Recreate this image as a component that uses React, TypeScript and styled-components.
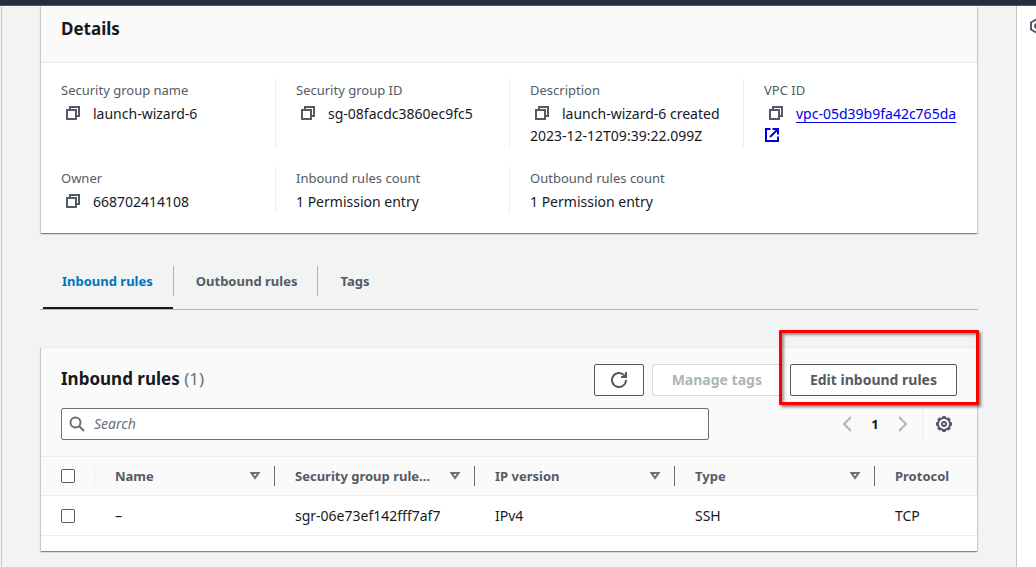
import React from "react";
import styled, { createGlobalStyle, css } from "styled-components";

const GlobalStyle = createGlobalStyle`
  *, *::before, *::after { box-sizing: border-box; }
  body {
    margin: 0;
    background: #f2f3f3;
    color: #16191f;
    font-family: "Noto Sans", "Open Sans", sans-serif;
    font-size: 14px;
    line-height: 22px;
  }
`;

const Shell = styled.div`
  display: flex;
  flex-direction: column;
  min-height: 100vh;
`;

const TopBar = styled.header`
  height: 6px;
  background: #232f3e;
  border-bottom: 1px solid #5d5468;
`;

const Columns = styled.div`
  display: flex;
  flex: 1;
`;

const Content = styled.main`
  flex: 1;
  min-width: 0;
  margin-left: 1px;
  padding: 0 38px 15px;
  border-left: 1px solid #c3c8c8;
`;

const HelpRail = styled.aside`
  flex: none;
  width: 20px;
  padding: 12px 0 0 12px;
  overflow: hidden;
  background: #fff;
  border-left: 1px solid #bfc7c7;
`;

const IconButton = styled.button`
  display: inline-flex;
  padding: 0;
  border: 0;
  background: none;
  color: ${(p) => p.color ?? "#545b64"};
`;

const Card = styled.section`
  margin: 0 1px;
  background: #fff;
  box-shadow: 0 1px 1px 0 rgba(0, 28, 36, 0.3), 1px 1px 1px 0 rgba(0, 28, 36, 0.15),
    -1px 1px 1px 0 rgba(0, 28, 36, 0.15);
`;

const CardHeader = styled.div`
  padding: 11px 20px 22px;
  background: #fafafa;
  border-bottom: 1px solid #eaeded;
`;

const Title = styled.h2`
  margin: 0;
  font-size: 17px;
  line-height: 23px;
  font-weight: 700;
`;

const Count = styled.span`
  color: #687078;
  font-weight: 400;
`;

const Fields = styled.dl`
  display: grid;
  grid-template-columns: repeat(4, 1fr);
  row-gap: 20px;
  margin: 0;
  padding: 16px 0 20px;
`;

const FieldBox = styled.div`
  min-width: 0;
  padding: 0 16px 0 20px;
  &:not(:nth-child(4n + 1)) {
    border-left: 1px solid #eaeded;
  }
`;

const FieldLabel = styled.dt`
  margin-bottom: 2px;
  color: #545b64;
  font-size: 13px;
`;

const FieldValue = styled.dd`
  margin: 0;
`;

const CopyButton = styled(IconButton)`
  margin: 0 12px 0 4px;
  vertical-align: -2px;
`;

const Link = styled.a`
  color: #0000e6;
  text-underline-offset: 3px;
  svg {
    vertical-align: -2px;
  }
`;

const Tabs = styled.div`
  display: flex;
  margin-top: 33px;
  border-bottom: 1px solid #aab7b8;
`;

const TabSlot = styled.div`
  & + &::before {
    content: "";
    float: left;
    width: 1px;
    height: 30px;
    background: #aab7b8;
  }
`;

const Tab = styled.button<{ $active?: boolean }>`
  height: 43px;
  padding: 0 20px 12px 19px;
  border: 0;
  border-bottom: 2px solid ${(p) => (p.$active ? "#16191f" : "transparent")};
  margin: 0 0 0 3px;
  background: none;
  color: ${(p) => (p.$active ? "#0073bb" : "#545b64")};
  font: 700 13px/24px "Noto Sans", sans-serif;
`;

const RulesCard = styled(Card)`
  margin-top: 37px;
  border-top: 1px solid #eaeded;
`;

const RulesHeader = styled.div`
  padding: 16px 20px;
  background: #fafafa;
`;

const HeaderRow = styled.div`
  display: flex;
  justify-content: space-between;
`;

const RulesTitle = styled(Title)`
  padding-top: 3px;
`;

const Actions = styled.div`
  display: flex;
  gap: 8px;
`;

const Button = styled.button`
  display: inline-flex;
  align-items: center;
  justify-content: center;
  height: 32px;
  padding: 0 19px;
  border: 1px solid #545b64;
  border-radius: 2px;
  background: #fff;
  color: #545b64;
  font: 700 14px/20px "Noto Sans", sans-serif;
  &:disabled {
    border-color: #d5dbdb;
    color: #aab7b8;
  }
`;

const RefreshButton = styled(Button)`
  width: 50px;
  padding: 0;
`;

const Highlighted = styled.div`
  position: relative;
  display: flex;
  &::after {
    content: "";
    position: absolute;
    inset: -34px -22px -9px -11px;
    border: 3px solid #f00;
    border-radius: 1px;
    box-shadow: 2px 2px 3px rgba(0, 0, 0, 0.5), inset 2px 2px 3px rgba(0, 0, 0, 0.4);
    pointer-events: none;
  }
`;

const FilterRow = styled(HeaderRow)`
  margin-top: 12px;
`;

const SearchBox = styled.label`
  display: flex;
  align-items: center;
  gap: 9px;
  flex: 0 1 648px;
  height: 32px;
  padding: 0 7px;
  border: 1px solid #687078;
  border-radius: 2px;
  background: #fff;
  color: #687078;
`;

const SearchInput = styled.input`
  flex: 1;
  min-width: 0;
  padding: 0;
  border: 0;
  outline: 0;
  background: none;
  font: 400 14px/22px "Noto Sans", sans-serif;
  &::placeholder {
    color: #687078;
    font-style: italic;
    opacity: 1;
  }
`;

const Pager = styled.nav`
  display: flex;
  align-items: center;
`;

const PageNumber = styled(IconButton)`
  justify-content: center;
  width: 40px;
  color: #16191f;
  font: 700 13px/22px "Noto Sans", sans-serif;
`;

const Preferences = styled.div`
  display: flex;
  align-items: center;
  height: 32px;
  margin-left: 11px;
  padding: 0 5px 0 13px;
  border-left: 1px solid #eaeded;
`;

const TableWrap = styled.div`
  overflow: hidden;
  padding-bottom: 15px;
`;

const Table = styled.table`
  width: 100%;
  min-width: 1034px;
  table-layout: fixed;
  border-collapse: separate;
  border-spacing: 0;
`;

const Col = styled.col<{ $w: number }>`
  width: ${(p) => p.$w}px;
`;

const cell = css`
  padding: 0 0 0 20px;
  border-bottom: 1px solid #eaeded;
  text-align: left;
`;

const Th = styled.th`
  ${cell}
  height: 40px;
  border-top: 1px solid #eaeded;
  background: #fafafa;
  color: #545b64;
  font-size: 13px;
`;

const Td = styled.td`
  ${cell}
  height: 40px;
`;

const HeadInner = styled.div<{ $light?: boolean }>`
  display: flex;
  align-items: center;
  justify-content: space-between;
  height: 20px;
  padding-right: 13px;
  border-right: 1px solid ${(p) => (p.$light ? "#eaeded" : "#687078")};
`;

const Checkbox = styled.input`
  appearance: none;
  display: block;
  width: 14px;
  height: 14px;
  margin: 0;
  border: 1px solid #545b64;
  border-radius: 2px;
  background: #fff;
`;

type IconProps = { size?: number; children: React.ReactNode };
const Icon = ({ size = 16, children }: IconProps) => (
  <svg width={size} height={size} viewBox="0 0 16 16" fill="none" stroke="currentColor" strokeWidth="2" aria-hidden="true">
    {children}
  </svg>
);

const CopyIcon = () => (
  <Icon>
    <path d="M2 5h9v9H2zM5 5V2h9v9h-3" />
  </Icon>
);
const ExternalIcon = () => (
  <Icon>
    <path d="M6.5 2H2v12h12V9.5M8.5 2H14v5.5M14 2 6 10" />
  </Icon>
);
const SearchIcon = () => (
  <Icon>
    <circle cx="6.5" cy="6.5" r="5" />
    <path d="m10 10 5 5" />
  </Icon>
);
const RefreshIcon = () => (
  <Icon>
    <path d="M15 8a7 7 0 1 1-2-4.900l1.500 1.500M15 0v5h-5" />
  </Icon>
);
const gearTeeth = Array.from({ length: 8 }, (_, i) => i * 45);
const GearIcon = () => (
  <Icon>
    <circle cx="8" cy="8" r="6" />
    <circle cx="8" cy="8" r="2" />
    {gearTeeth.map((a) => (
      <path key={a} d="M6.300 1h3.400" transform={`rotate(${a} 8 8)`} />
    ))}
  </Icon>
);
const HexIcon = () => (
  <Icon>
    <path d="M8 1l-6 3.500v7L8 15l6-3.500v-7z" />
    <circle cx="8" cy="8" r="2" />
  </Icon>
);
const SortIcon = () => (
  <svg width="12" height="10" viewBox="0 0 12 10" fill="none" stroke="#687078" strokeWidth="2" aria-hidden="true">
    <path d="M2.500 2h7L6 7z" />
  </svg>
);

type FieldProps = { label: string; copy?: boolean; children: React.ReactNode };
const Field = ({ label, copy, children }: FieldProps) => (
  <FieldBox>
    <FieldLabel>{label}</FieldLabel>
    <FieldValue>
      {copy && (
        <CopyButton aria-label={`Copy ${label}`}>
          <CopyIcon />
        </CopyButton>
      )}
      {children}
    </FieldValue>
  </FieldBox>
);

const sortable = ["Name", "Security group rule…", "IP version", "Type"];
const rows = [["–", "sgr-06e73ef142fff7af7", "IPv4", "SSH", "TCP"]];

export default function App() {
  return (
    <Shell>
      <GlobalStyle />
      <TopBar />
      <Columns>
        <Content>
          <Card>
            <CardHeader>
              <Title>Details</Title>
            </CardHeader>
            <Fields>
              <Field label="Security group name" copy>launch-wizard-6</Field>
              <Field label="Security group ID" copy>sg-08facdc3860ec9fc5</Field>
              <Field label="Description" copy>launch-wizard-6 created 2023-12-12T09:39:22.099Z</Field>
              <Field label="VPC ID" copy>
                <Link href="#vpc">
                  vpc-05d39b9fa42c765da <ExternalIcon />
                </Link>
              </Field>
              <Field label="Owner" copy>668702414108</Field>
              <Field label="Inbound rules count">1 Permission entry</Field>
              <Field label="Outbound rules count">1 Permission entry</Field>
            </Fields>
          </Card>

          <Tabs role="tablist">
            <TabSlot><Tab role="tab" aria-selected $active>Inbound rules</Tab></TabSlot>
            <TabSlot><Tab role="tab">Outbound rules</Tab></TabSlot>
            <TabSlot><Tab role="tab">Tags</Tab></TabSlot>
          </Tabs>

          <RulesCard>
            <RulesHeader>
              <HeaderRow>
                <RulesTitle>Inbound rules <Count>(1)</Count></RulesTitle>
                <Actions>
                  <RefreshButton aria-label="Refresh"><RefreshIcon /></RefreshButton>
                  <Button disabled>Manage tags</Button>
                  <Highlighted><Button>Edit inbound rules</Button></Highlighted>
                </Actions>
              </HeaderRow>
              <FilterRow>
                <SearchBox>
                  <SearchIcon />
                  <SearchInput type="text" placeholder="Search" aria-label="Search rules" />
                </SearchBox>
                <Pager aria-label="Pages">
                  <IconButton color="#aab7b8" aria-label="Previous page">
                    <Icon><path d="m12 1-7 7 7 7" /></Icon>
                  </IconButton>
                  <PageNumber>1</PageNumber>
                  <IconButton color="#aab7b8" aria-label="Next page">
                    <Icon><path d="m4 1 7 7-7 7" /></Icon>
                  </IconButton>
                  <Preferences>
                    <IconButton aria-label="Preferences"><GearIcon /></IconButton>
                  </Preferences>
                </Pager>
              </FilterRow>
            </RulesHeader>
            <TableWrap>
              <Table>
                <colgroup>
                  <Col $w={54} />
                  <Col $w={180} />
                  <Col $w={200} />
                  <Col $w={200} />
                  <Col $w={200} />
                  <Col $w={200} />
                </colgroup>
                <thead>
                  <tr>
                    <Th>
                      <HeadInner $light><Checkbox type="checkbox" aria-label="Select all rules" /></HeadInner>
                    </Th>
                    {sortable.map((name) => (
                      <Th key={name}><HeadInner>{name}<SortIcon /></HeadInner></Th>
                    ))}
                    <Th>Protocol</Th>
                  </tr>
                </thead>
                <tbody>
                  {rows.map((row) => (
                    <tr key={row[1]}>
                      <Td><Checkbox type="checkbox" aria-label={`Select ${row[1]}`} /></Td>
                      {row.map((value) => <Td key={value}>{value}</Td>)}
                    </tr>
                  ))}
                </tbody>
              </Table>
            </TableWrap>
          </RulesCard>
        </Content>
        <HelpRail>
          <IconButton aria-label="Open help panel"><HexIcon /></IconButton>
        </HelpRail>
      </Columns>
    </Shell>
  );
}
